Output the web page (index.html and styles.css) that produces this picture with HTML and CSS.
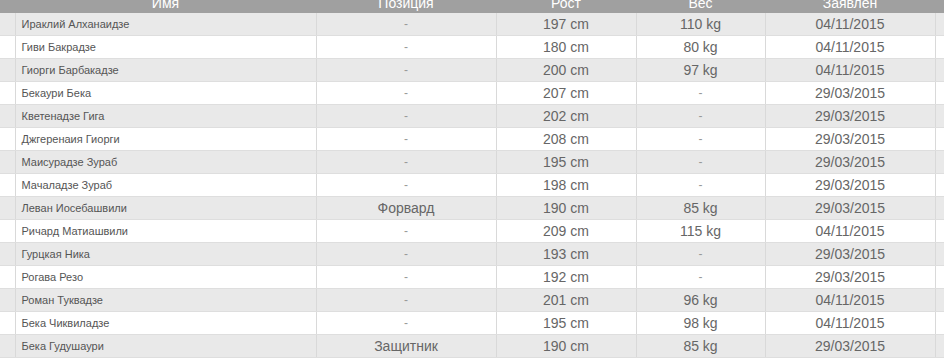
FILE: index.html
```html
<!DOCTYPE html>
<html lang="ru">
<head>
    <meta charset="UTF-8">
    <title>Состав</title>
    <link rel="stylesheet" href="styles.css">
</head>
<body>
    <table class="roster">
        <colgroup>
            <col class="c-pad">
            <col class="c-name">
            <col class="c-pos">
            <col class="c-height">
            <col class="c-weight">
            <col class="c-date">
            <col class="c-rest">
        </colgroup>
        <thead>
            <tr>
                <th></th>
                <th>Имя</th>
                <th>Позиция</th>
                <th>Рост</th>
                <th>Вес</th>
                <th>Заявлен</th>
                <th></th>
            </tr>
        </thead>
        <tbody>
            <tr><td></td><td class="name">Ираклий Алханаидзе</td><td class="dash">-</td><td>197 cm</td><td>110 kg</td><td>04/11/2015</td><td></td></tr>
            <tr><td></td><td class="name">Гиви Бакрадзе</td><td class="dash">-</td><td>180 cm</td><td>80 kg</td><td>04/11/2015</td><td></td></tr>
            <tr><td></td><td class="name">Гиорги Барбакадзе</td><td class="dash">-</td><td>200 cm</td><td>97 kg</td><td>04/11/2015</td><td></td></tr>
            <tr><td></td><td class="name">Бекаури Бека</td><td class="dash">-</td><td>207 cm</td><td class="dash">-</td><td>29/03/2015</td><td></td></tr>
            <tr><td></td><td class="name">Кветенадзе Гига</td><td class="dash">-</td><td>202 cm</td><td class="dash">-</td><td>29/03/2015</td><td></td></tr>
            <tr><td></td><td class="name">Джгеренаия Гиорги</td><td class="dash">-</td><td>208 cm</td><td class="dash">-</td><td>29/03/2015</td><td></td></tr>
            <tr><td></td><td class="name">Маисурадзе Зураб</td><td class="dash">-</td><td>195 cm</td><td class="dash">-</td><td>29/03/2015</td><td></td></tr>
            <tr><td></td><td class="name">Мачаладзе Зураб</td><td class="dash">-</td><td>198 cm</td><td class="dash">-</td><td>29/03/2015</td><td></td></tr>
            <tr><td></td><td class="name">Леван Иосебашвили</td><td>Форвард</td><td>190 cm</td><td>85 kg</td><td>29/03/2015</td><td></td></tr>
            <tr><td></td><td class="name">Ричард Матиашвили</td><td class="dash">-</td><td>209 cm</td><td>115 kg</td><td>04/11/2015</td><td></td></tr>
            <tr><td></td><td class="name">Гурцкая Ника</td><td class="dash">-</td><td>193 cm</td><td class="dash">-</td><td>29/03/2015</td><td></td></tr>
            <tr><td></td><td class="name">Рогава Резо</td><td class="dash">-</td><td>192 cm</td><td class="dash">-</td><td>29/03/2015</td><td></td></tr>
            <tr><td></td><td class="name">Роман Туквадзе</td><td class="dash">-</td><td>201 cm</td><td>96 kg</td><td>04/11/2015</td><td></td></tr>
            <tr><td></td><td class="name">Бека Чиквиладзе</td><td class="dash">-</td><td>195 cm</td><td>98 kg</td><td>04/11/2015</td><td></td></tr>
            <tr><td></td><td class="name">Бека Гудушаури</td><td>Защитник</td><td>190 cm</td><td>85 kg</td><td>29/03/2015</td><td></td></tr>
        </tbody>
    </table>
</body>
</html>
```
FILE: styles.css
```css
body {
    margin: 0;
    background: #fff;
    font-family: "Liberation Sans", Arial, sans-serif;
    overflow: hidden;
}
.roster {
    width: 944px;
    margin-top: -13px;
    border-collapse: collapse;
    table-layout: fixed;
    color: #666;
}
.c-pad { width: 15px; }
.c-name { width: 301px; }
.c-pos { width: 180px; }
.c-height { width: 140px; }
.c-weight { width: 129px; }
.c-date { width: 170px; }
.c-rest { width: 9px; }
.roster th {
    background: #a0a0a0;
    color: #fff;
    font-weight: normal;
    font-size: 14px;
    line-height: 16px;
    padding: 8px 0 2px;
    text-align: center;
}
.roster td {
    height: 22px;
    padding: 0;
    font-size: 14px;
    text-align: center;
    border-bottom: 1px solid #dedede;
    border-left: 1px solid #d9d9d9;
}
.roster td:first-child {
    border-left: none;
}
.roster tbody tr:nth-child(odd) {
    background: #e9e9e9;
}
.roster td.name {
    text-align: left;
    padding-left: 6px;
    font-size: 11px;
    color: #555;
}
.roster td.dash {
    color: #999;
    font-size: 12px;
}
```
